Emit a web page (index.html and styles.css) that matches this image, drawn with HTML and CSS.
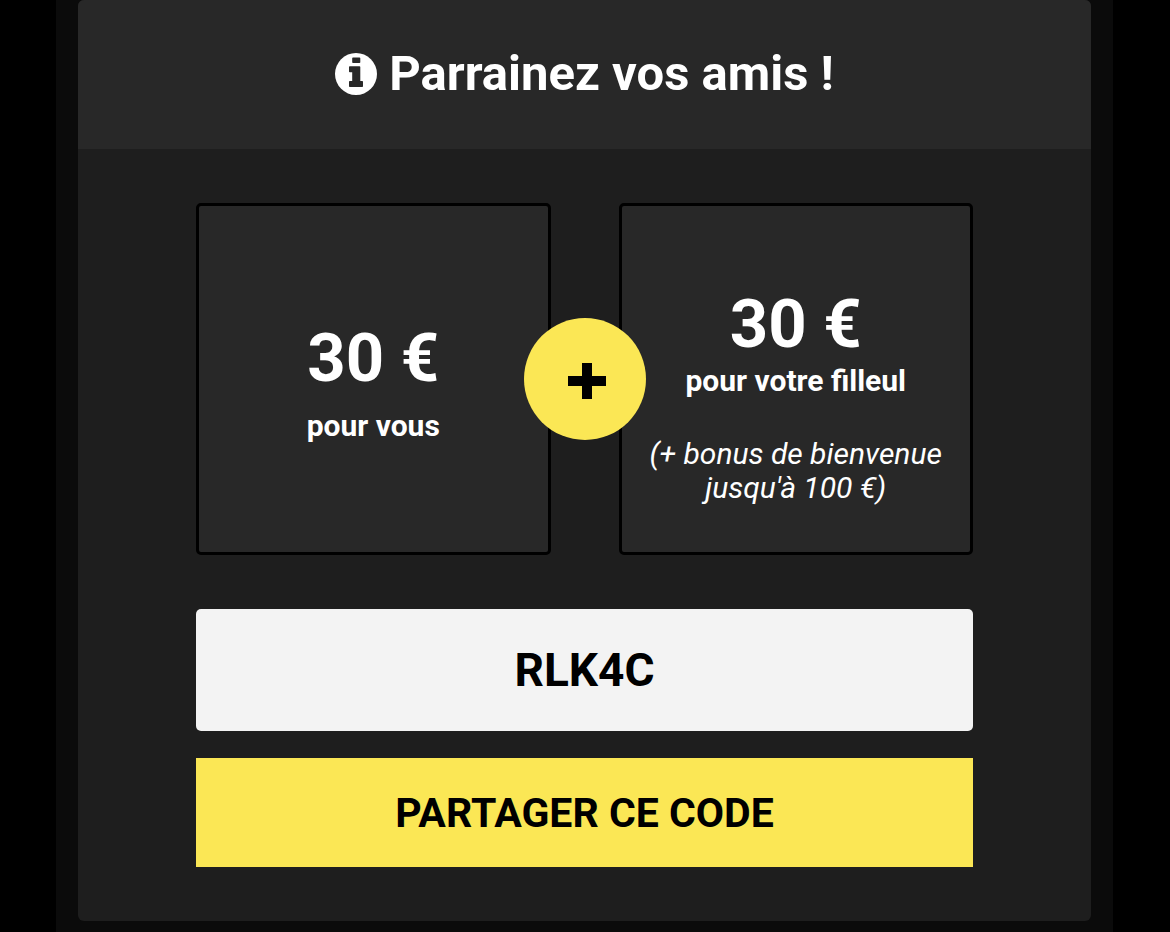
FILE: index.html
```html
<!DOCTYPE html>
<html lang="fr">
<head>
    <meta charset="UTF-8">
    <meta name="viewport" content="width=device-width, initial-scale=1.0">
    <title>Parrainez vos amis !</title>
    <link rel="stylesheet" href="styles.css">
</head>
<body>
    <main class="page">
        <section class="panel">
            <header class="panel-header">
                <svg class="info-icon" viewBox="0 0 42 42" aria-hidden="true">
                    <circle cx="21" cy="21" r="21" fill="#fff"/>
                    <path fill="#282828" d="M18 4.500h6.500q.8 0 .8.800v4q0 .8-.8.800H18q-.8 0-.8-.800v-4q0-.8.8-.800zM14.800 13.200h9.700q.8 0 .8.800v14h1.900q.8 0 .8.800v4.500q0 .8-.8.800H14.800q-.8 0-.8-.800v-4.500q0-.8.8-.800h2.400v-8.700h-2.400q-.8 0-.8-.800V14q0-.8.8-.800z"/>
                </svg>
                <h1>Parrainez vos amis !</h1>
            </header>
            <div class="panel-body">
                <div class="rewards">
                    <div class="card">
                        <p class="amount">30 €</p>
                        <p class="label">pour vous</p>
                    </div>
                    <div class="card card-friend">
                        <p class="amount">30 €</p>
                        <p class="label">pour votre filleul</p>
                        <p class="note">(+ bonus de bienvenue jusqu'à 100 €)</p>
                    </div>
                    <div class="plus">
                        <svg viewBox="0 0 38 36" aria-hidden="true">
                            <path d="M14 0h10v13h14v10H24v13H14V23H0V13h14z"/>
                        </svg>
                    </div>
                </div>
                <input class="code" type="text" value="RLK4C" aria-label="Code de parrainage" readonly>
                <button class="share" type="button">PARTAGER CE CODE</button>
            </div>
        </section>
    </main>
</body>
</html>
```
FILE: styles.css
```css
* {
    box-sizing: border-box;
}
body {
    margin: 0;
    background-color: #000;
    color: #fff;
    font-family: Roboto, sans-serif;
}
h1, p {
    margin: 0;
}
.page {
    min-height: 100vh;
    margin: 0 57px 0 56px;
    padding: 0 22px 11px;
    background-color: #0b0b0b;
}
.panel {
    background-color: #1e1e1e;
    border-radius: 6px;
    overflow: hidden;
}
.panel-header {
    display: flex;
    justify-content: center;
    align-items: center;
    gap: 12px;
    padding: 46px 20px 47px;
    background-color: #282828;
}
.info-icon {
    width: 42px;
    height: 42px;
}
h1 {
    font-size: 49px;
    line-height: 56px;
    font-weight: 700;
}
.panel-body {
    display: flex;
    flex-direction: column;
    padding: 54px 118px;
}
.rewards {
    position: relative;
    display: flex;
    gap: 68px;
    margin-bottom: 54px;
}
.card {
    flex: 1 1 0;
    display: flex;
    flex-direction: column;
    justify-content: center;
    min-height: 352px;
    padding: 5px 24px 0;
    background-color: #282828;
    border: 3px solid #000;
    border-radius: 5px;
    text-align: center;
}
.amount {
    font-size: 67px;
    line-height: 78px;
    font-weight: 700;
}
.label {
    margin-top: 11px;
    font-size: 30px;
    line-height: 36px;
    font-weight: 700;
}
.card-friend {
    padding-top: 31px;
}
.card-friend .label {
    margin-top: 0;
}
.note {
    margin-top: 38px;
    font-size: 30px;
    line-height: 34px;
    font-style: italic;
}
.plus {
    position: absolute;
    top: 50%;
    left: 50%;
    transform: translate(-50%, -50%);
    display: flex;
    justify-content: center;
    align-items: center;
    width: 122px;
    height: 122px;
    padding: 3px 0 0 5px;
    background-color: #fbe755;
    border-radius: 50%;
}
.plus svg {
    width: 38px;
    height: 36px;
}
.code {
    width: 100%;
    height: 122px;
    margin-bottom: 27px;
    padding: 0;
    border: none;
    border-radius: 5px;
    background-color: #f3f3f3;
    color: #000;
    font-family: inherit;
    font-size: 46px;
    font-weight: 700;
    text-align: center;
}
.share {
    padding: 31px 20px 29px;
    border: none;
    background-color: #fbe755;
    color: #000;
    font-family: inherit;
    font-size: 41px;
    line-height: 49px;
    font-weight: 700;
    cursor: pointer;
}
```
